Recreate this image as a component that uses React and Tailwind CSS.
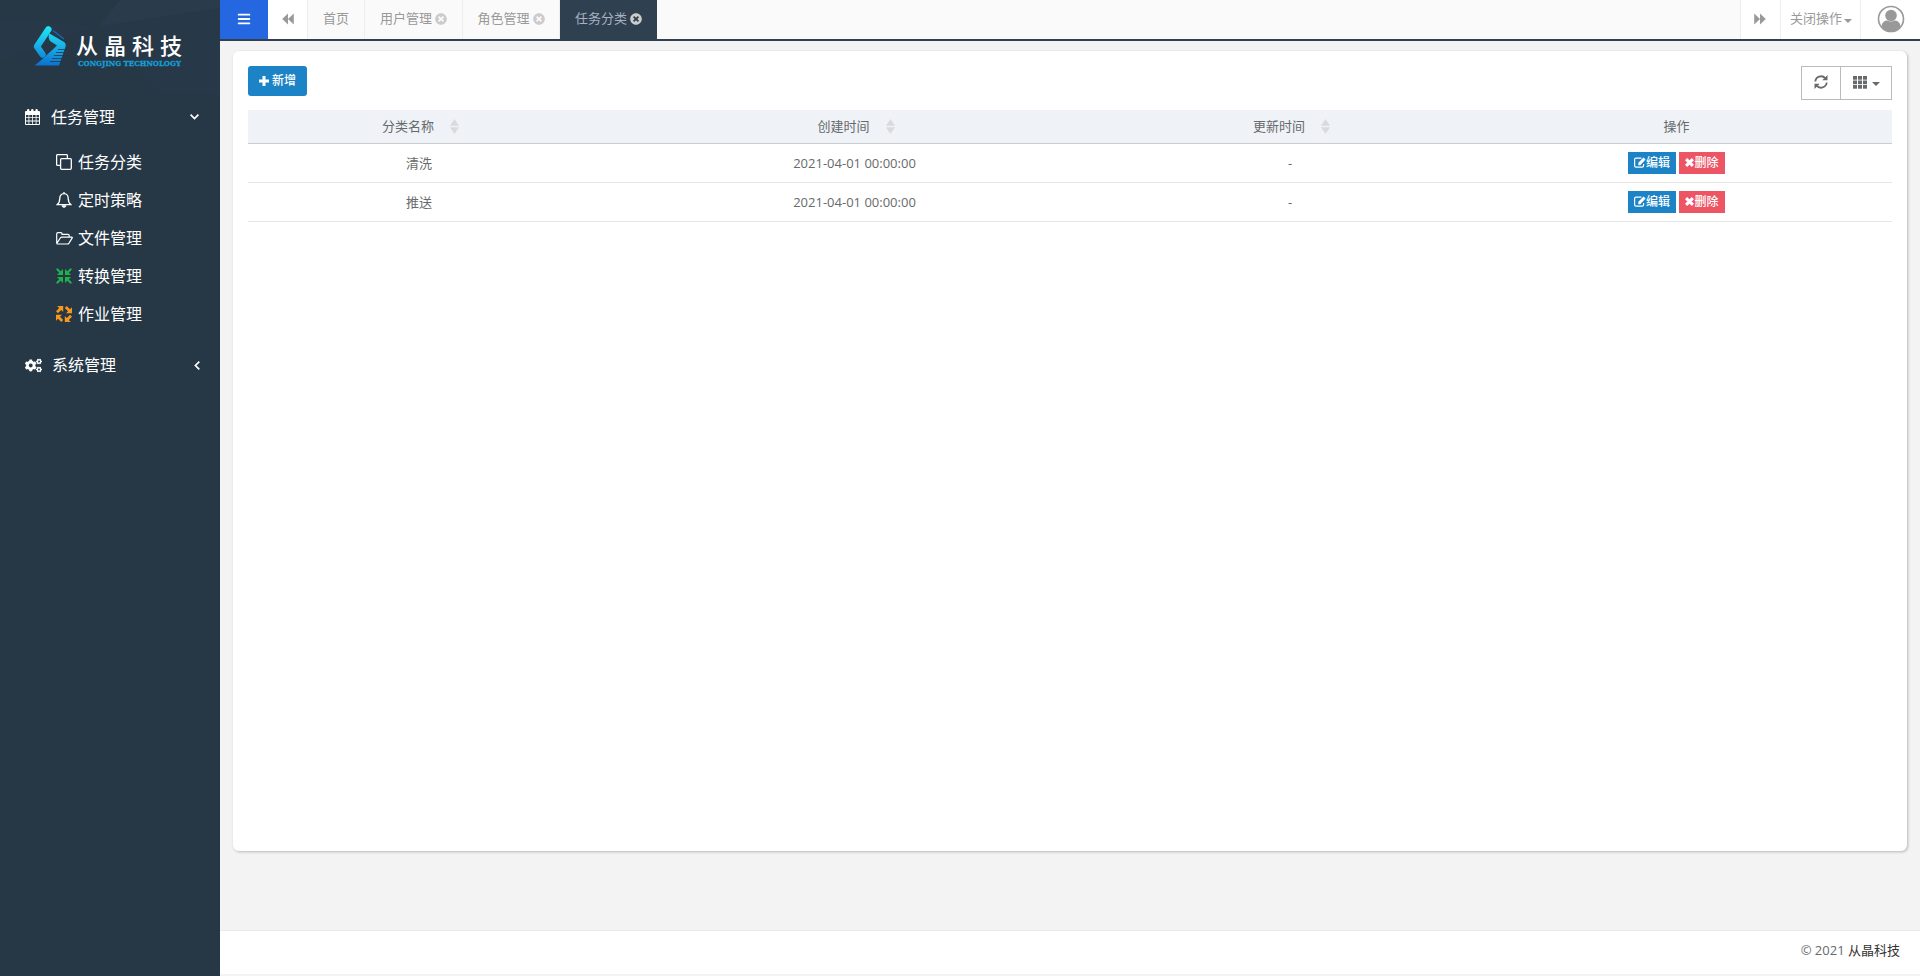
import React from "react";
import { FaBars, FaCogs, FaTimesCircle } from "react-icons/fa";

const CalendarIcon = () => (
  <svg width="15" height="16" viewBox="0 0 15 16" fill="currentColor">
    <path fillRule="evenodd" d="M1 2h1V1q0-1 1.2-1T4.400 1v1h1.700V1q0-1 1.200-1T8.500 1v1h1.900V1q0-1 1.200-1T12.800 1v1H14q1 0 1 1v12q0 1-1 1H1q-1 0-1-1V3q0-1 1-1zM1 6v2.300h2.500V6zM4.300 6v2.300h2.800V6zM7.900 6v2.300h2.800V6zM11.500 6v2.300H14V6zM1 9.100v2.500h2.500V9.100zM4.300 9.100v2.500h2.800V9.100zM7.900 9.100v2.500h2.800V9.100zM11.500 9.100v2.500H14V9.100zM1 12.400V15h2.500v-2.600zM4.300 12.400V15h2.800v-2.600zM7.900 12.400V15h2.800v-2.600zM11.500 12.400V15H14v-2.600z" />
  </svg>
);

const CloneIcon = () => (
  <svg width="16" height="16" viewBox="0 0 16 16" fill="none" stroke="currentColor" strokeWidth="1.300">
    <rect x="4.600" y="4.600" width="10.700" height="10.700" rx="1" />
    <path d="M4.600 11.400h-3a1 1 0 0 1-1-1V1.600a1 1 0 0 1 1-1h8.800a1 1 0 0 1 1 1v3" />
  </svg>
);

const BellIcon = () => (
  <svg width="16" height="16" viewBox="0 0 16 16" fill="none" stroke="currentColor" strokeWidth="1.300">
    <path d="M8 1.700C5 1.700 3.800 4 3.800 6.200c0 3.300-.9 5-2.700 6.500h13.800c-1.800-1.500-2.700-3.200-2.700-6.500 0-2.200-1.200-4.500-4.200-4.500zM8 0v1.700" />
    <path d="M6 13.500a2 2 0 0 0 4 0z" fill="currentColor" strokeWidth=".6" />
  </svg>
);

const FolderIcon = () => (
  <svg width="17" height="13" viewBox="0 0 17 13" fill="none" stroke="currentColor" strokeWidth="1.200" strokeLinejoin="round">
    <path d="M.7 11V1.900Q.7.700 1.900.700h2.900Q6 .7 6 1.900v.5h6Q13.200 2.400 13.200 3.600V5.300M.8 11.400 4.300 6q.5-.8 1.500-.8h9.900q1 0 .4.900l-3.100 5q-.6.900-1.600.9H1.900Q.6 12 .8 11" />
  </svg>
);

const InwardIcon = () => (
  <svg width="16" height="16" viewBox="0 0 16 16" fill="#1fb14c">
    {[0, 90, 180, 270].map((r) => (
      <path key={r} transform={`rotate(${r} 8 8)`} d="M0 1.500 1.500 0 4.700 3.200 7 .900V7H.900L3.200 4.700z" />
    ))}
  </svg>
);

const CycleIcon = () => (
  <svg width="16" height="16" viewBox="0 0 16 16" fill="#f8961d">
    {[0, 90, 180, 270].map((r) => (
      <path key={r} transform={`rotate(${r} 8 8)`} d="M1.200 0H7.200v6L5.200 4 1.900 7.200 0 5.300 3.200 2z" />
    ))}
  </svg>
);

const RewindIcon = ({ flip }) => (
  <svg width="12" height="12" viewBox="0 0 12 12" fill="#999" className={flip ? "rotate-180" : ""}>
    <path d="M6 .5v11L.200 6zM11.800 .5v11L6 6z" />
  </svg>
);

const PlusIcon = () => (
  <svg width="10" height="10" viewBox="0 0 10 10" fill="currentColor">
    <path d="M3.500 0h3v3.500H10v3H6.500V10h-3V6.500H0v-3h3.500z" />
  </svg>
);

const EditIcon = () => (
  <svg width="12" height="11" viewBox="0 0 12 11" fill="none" stroke="currentColor">
    <path d="M7.500 1.100H2.100Q.6 1.100.6 2.600v6Q.6 10.200 2.100 10.200h6Q9.600 10.200 9.600 8.600V7" strokeWidth="1.200" />
    <path d="M4.300 8.300V5.800L9.600.500l2 2-5.300 5.800z" fill="currentColor" stroke="none" />
  </svg>
);

const RemoveIcon = () => (
  <svg width="9" height="9" viewBox="0 0 9 9" fill="none" stroke="currentColor" strokeWidth="3">
    <path d="m1.100 1.100 6.800 6.800M7.900 1.100 1.100 7.900" />
  </svg>
);

const RefreshIcon = () => (
  <svg width="14" height="14" viewBox="0 0 14 14" fill="none" stroke="#676a6c" strokeWidth="1.8">
    <path d="M1.300 6.500A5.700 5.700 0 0 1 11.300 3.300M12.700 7.500A5.700 5.700 0 0 1 2.700 10.700" />
    <path d="M13.500 0v5.300H8.300zM.5 14V8.700h5.200z" fill="#676a6c" stroke="none" />
  </svg>
);

const GridIcon = () => (
  <svg width="14" height="13" viewBox="0 0 14 13" fill="#676a6c">
    {[0, 5, 10].map((x) => [0, 4.5, 9].map((y) => <rect key={`${x}-${y}`} x={x} y={y} width="4" height="3.700" />))}
  </svg>
);

const Caret = ({ className }) => (
  <svg width="8" height="4" viewBox="0 0 8 4" fill="currentColor" className={className}>
    <path d="M0 0h8L4 4z" />
  </svg>
);

const AvatarIcon = () => (
  <svg width="28" height="28" viewBox="0 0 28 28">
    <circle cx="14" cy="14" r="12.500" fill="none" stroke="#999" strokeWidth="1.600" />
    <circle cx="14" cy="10.500" r="5.800" fill="#999" />
    <path d="M4.500 21q1-5.500 6-5.500 3.500 2 7 0 5 0 6 5.500-3.500 5.500-9.500 5.500T4.500 21z" fill="#999" />
  </svg>
);

const SortIcon = () => (
  <svg width="9" height="15" viewBox="0 0 9 15" fill="#d9dadb">
    <path d="M4.500 0 9 6.700H0zM0 8.200h9L4.500 15z" />
  </svg>
);

const Logo = () => (
  <svg width="220" height="94" viewBox="0 0 220 94" className="block">
    <defs>
      <linearGradient id="mark" gradientUnits="userSpaceOnUse" x1="48" y1="26" x2="46" y2="66">
        <stop offset="0" stopColor="#1de9f2" />
        <stop offset=".5" stopColor="#18b0e6" />
        <stop offset="1" stopColor="#0b6fd0" />
      </linearGradient>
    </defs>
    <path d="M0 18 100 26 120 0H220V94H160L137 70 100 26 0 60z" fill="#2b3d4c" opacity=".35" />
    <path d="M100 26 220 8V0H120z" fill="#2d404f" opacity=".5" />
    <path d="M48.300 29.500 37 46.500l5.500 8" fill="none" stroke="url(#mark)" strokeWidth="6.500" strokeLinecap="round" strokeLinejoin="round" />
    <path d="M49.500 33.500 64 42q2.500 2 1.500 5L59 65.500H34.500L42 59.500 57 45.500 50 41q-2.500-4-.5-7.500z" fill="url(#mark)" />
    <path d="m53 30.500 11 8.500" stroke="#1769c4" strokeWidth="1.200" />
    <path d="M58 49.500h8M56 52.500h10M54 55.500h10M52 58.500h10M50 61.500h11" stroke="#263746" strokeWidth=".8" />
    <text x="76" y="53.500" textLength="106" fill="#fff" className="text-[22px] font-medium [font-family:'Noto_Sans_CJK_SC',sans-serif]">从晶科技</text>
    <text x="78" y="65.500" textLength="103" lengthAdjust="spacingAndGlyphs" fill="#159fd6" stroke="#159fd6" strokeWidth=".3" className="text-[8px] font-bold [font-family:'DejaVu_Serif',serif]">CONGJING TECHNOLOGY</text>
  </svg>
);

const subMenus = [
  { name: "任务分类", icon: <CloneIcon /> },
  { name: "定时策略", icon: <BellIcon /> },
  { name: "文件管理", icon: <FolderIcon /> },
  { name: "转换管理", icon: <InwardIcon /> },
  { name: "作业管理", icon: <CycleIcon /> },
];

const rows = [
  { name: "清洗", created: "2021-04-01 00:00:00", updated: "-" },
  { name: "推送", created: "2021-04-01 00:00:00", updated: "-" },
];

const Sidebar = () => (
  <aside className="flex w-[220px] shrink-0 flex-col bg-[#263746] text-base text-white">
    <Logo />
    <div className="flex h-[46px] items-center pr-[21px] pl-[25px]">
      <CalendarIcon />
      <span className="ml-[11px]">任务管理</span>
      <svg width="9" height="6" viewBox="0 0 9 6" fill="none" stroke="currentColor" strokeWidth="1.700" className="ml-auto">
        <path d="m.6.700 3.900 3.900L8.400.700" />
      </svg>
    </div>
    <ul className="pt-[3px]">
      {subMenus.map((item) => (
        <li key={item.name} className="flex h-[38px] items-center pl-14">
          <span className="flex w-[22px] items-center">{item.icon}</span>
          <span>{item.name}</span>
        </li>
      ))}
    </ul>
    <div className="mt-[9px] flex h-[46px] items-center pr-5 pl-[25px]">
      <FaCogs size={17} />
      <span className="ml-2.5">系统管理</span>
      <svg width="6" height="9" viewBox="0 0 6 9" fill="none" stroke="currentColor" strokeWidth="1.700" className="ml-auto">
        <path d="M5.300.600 1.400 4.500l3.900 3.900" />
      </svg>
    </div>
  </aside>
);

const TopBar = () => (
  <header className="flex h-[41px] shrink-0 border-b-2 border-[#2f4050] bg-[#fafafa] text-[13px] text-[#999]">
    <button className="flex w-12 items-center justify-center bg-[#2567e1] pb-px text-white">
      <FaBars size={14} />
    </button>
    <button className="flex w-10 items-center justify-center border-r border-[#eee] bg-white pb-px">
      <RewindIcon />
    </button>
    <div className="flex w-[57px] items-center border-r border-[#eee] pb-0.5 pl-[15px]">首页</div>
    {["用户管理", "角色管理"].map((tab) => (
      <div key={tab} className="flex w-[97.500px] items-center gap-[3px] border-r border-[#eee] pb-0.5 pl-[15px]">
        {tab}
        <FaTimesCircle size={12} className="mt-px text-[#ccc]" />
      </div>
    ))}
    <div className="flex w-[97px] items-center gap-[3px] bg-[#2f4050] pb-0.5 pl-[15px] text-[#a7b1c2]">
      任务分类
      <FaTimesCircle size={12} className="mt-px text-[#ccc]" />
    </div>
    <div className="ml-auto flex bg-white">
      <button className="flex w-10 items-center border-l border-[#eee] pb-px pl-[13px]">
        <RewindIcon flip />
      </button>
      <button className="flex w-20 items-center border-l border-[#eee] pb-0.5 pl-[9px]">
        关闭操作
        <Caret className="mt-1 ml-0.5" />
      </button>
      <div className="flex w-[60px] items-center border-l border-[#eee] pb-px pl-4">
        <AvatarIcon />
      </div>
    </div>
  </header>
);

const SortHeader = ({ children }) => (
  <th className="font-normal">
    <div className="flex items-center justify-center">
      <span className="pt-px pr-4 pl-2">{children}</span>
      <span className="pr-[5px]"><SortIcon /></span>
    </div>
  </th>
);

const App = () => (
  <div className="flex h-[976px] w-full bg-[#f3f3f3] text-[13px] text-[#676a6c] [font-family:'Open_Sans','Noto_Sans_CJK_SC',sans-serif]">
    <Sidebar />
    <div className="flex min-w-0 flex-1 flex-col">
      <TopBar />
      <main className="mx-[13px] mt-2.5 h-[800px] rounded-md bg-white px-[15px] pt-[15px] shadow-[1px_1px_3px_rgba(0,0,0,0.25)]">
        <div className="flex h-[44px] items-start justify-between">
          <button className="flex h-[30px] w-[59px] items-center justify-center gap-[3px] rounded-[3px] bg-[#1c84c6] pb-px text-xs font-medium text-white">
            <PlusIcon />
            新增
          </button>
          <div className="flex h-[34px] w-[91px] border border-[#bbb]">
            <button className="flex w-[38px] items-center justify-center pb-0.5">
              <RefreshIcon />
            </button>
            <button className="flex flex-1 items-center justify-center gap-[5px] border-l border-[#bbb] pb-px">
              <GridIcon />
              <Caret className="mt-0.5" />
            </button>
          </div>
        </div>
        <table className="w-full table-fixed border-collapse text-center">
          <colgroup>
            <col className="w-[342px]" />
            <col className="w-[529px]" />
            <col className="w-[342px]" />
            <col />
          </colgroup>
          <thead>
            <tr className="h-[33px] border-b border-[#ccc] bg-[#eff2f7]">
              <SortHeader>分类名称</SortHeader>
              <SortHeader>创建时间</SortHeader>
              <SortHeader>更新时间</SortHeader>
              <th className="pt-px font-normal">操作</th>
            </tr>
          </thead>
          <tbody>
            {rows.map((row) => (
              <tr key={row.name} className="h-[39px] border-b border-[#e7e7e7]">
                <td className="pt-0.5">{row.name}</td>
                <td className="pt-0.5">{row.created}</td>
                <td className="pt-0.5">{row.updated}</td>
                <td>
                  <div className="flex justify-center gap-[3px] text-xs font-medium text-white">
                    <button className="flex h-[22px] w-12 items-center justify-center bg-[#1c84c6]">
                      <EditIcon />
                      编辑
                    </button>
                    <button className="flex h-[22px] w-[46px] items-center justify-center bg-[#ed5565]">
                      <RemoveIcon />
                      删除
                    </button>
                  </div>
                </td>
              </tr>
            ))}
          </tbody>
        </table>
      </main>
      <footer className="mt-auto mb-0.5 flex h-[44px] items-center justify-end border-t border-[#e7eaec] bg-white pr-5 pb-1">
        <span>© 2021 <span className="text-[#333]">从晶科技</span></span>
      </footer>
    </div>
  </div>
);

export default App;
